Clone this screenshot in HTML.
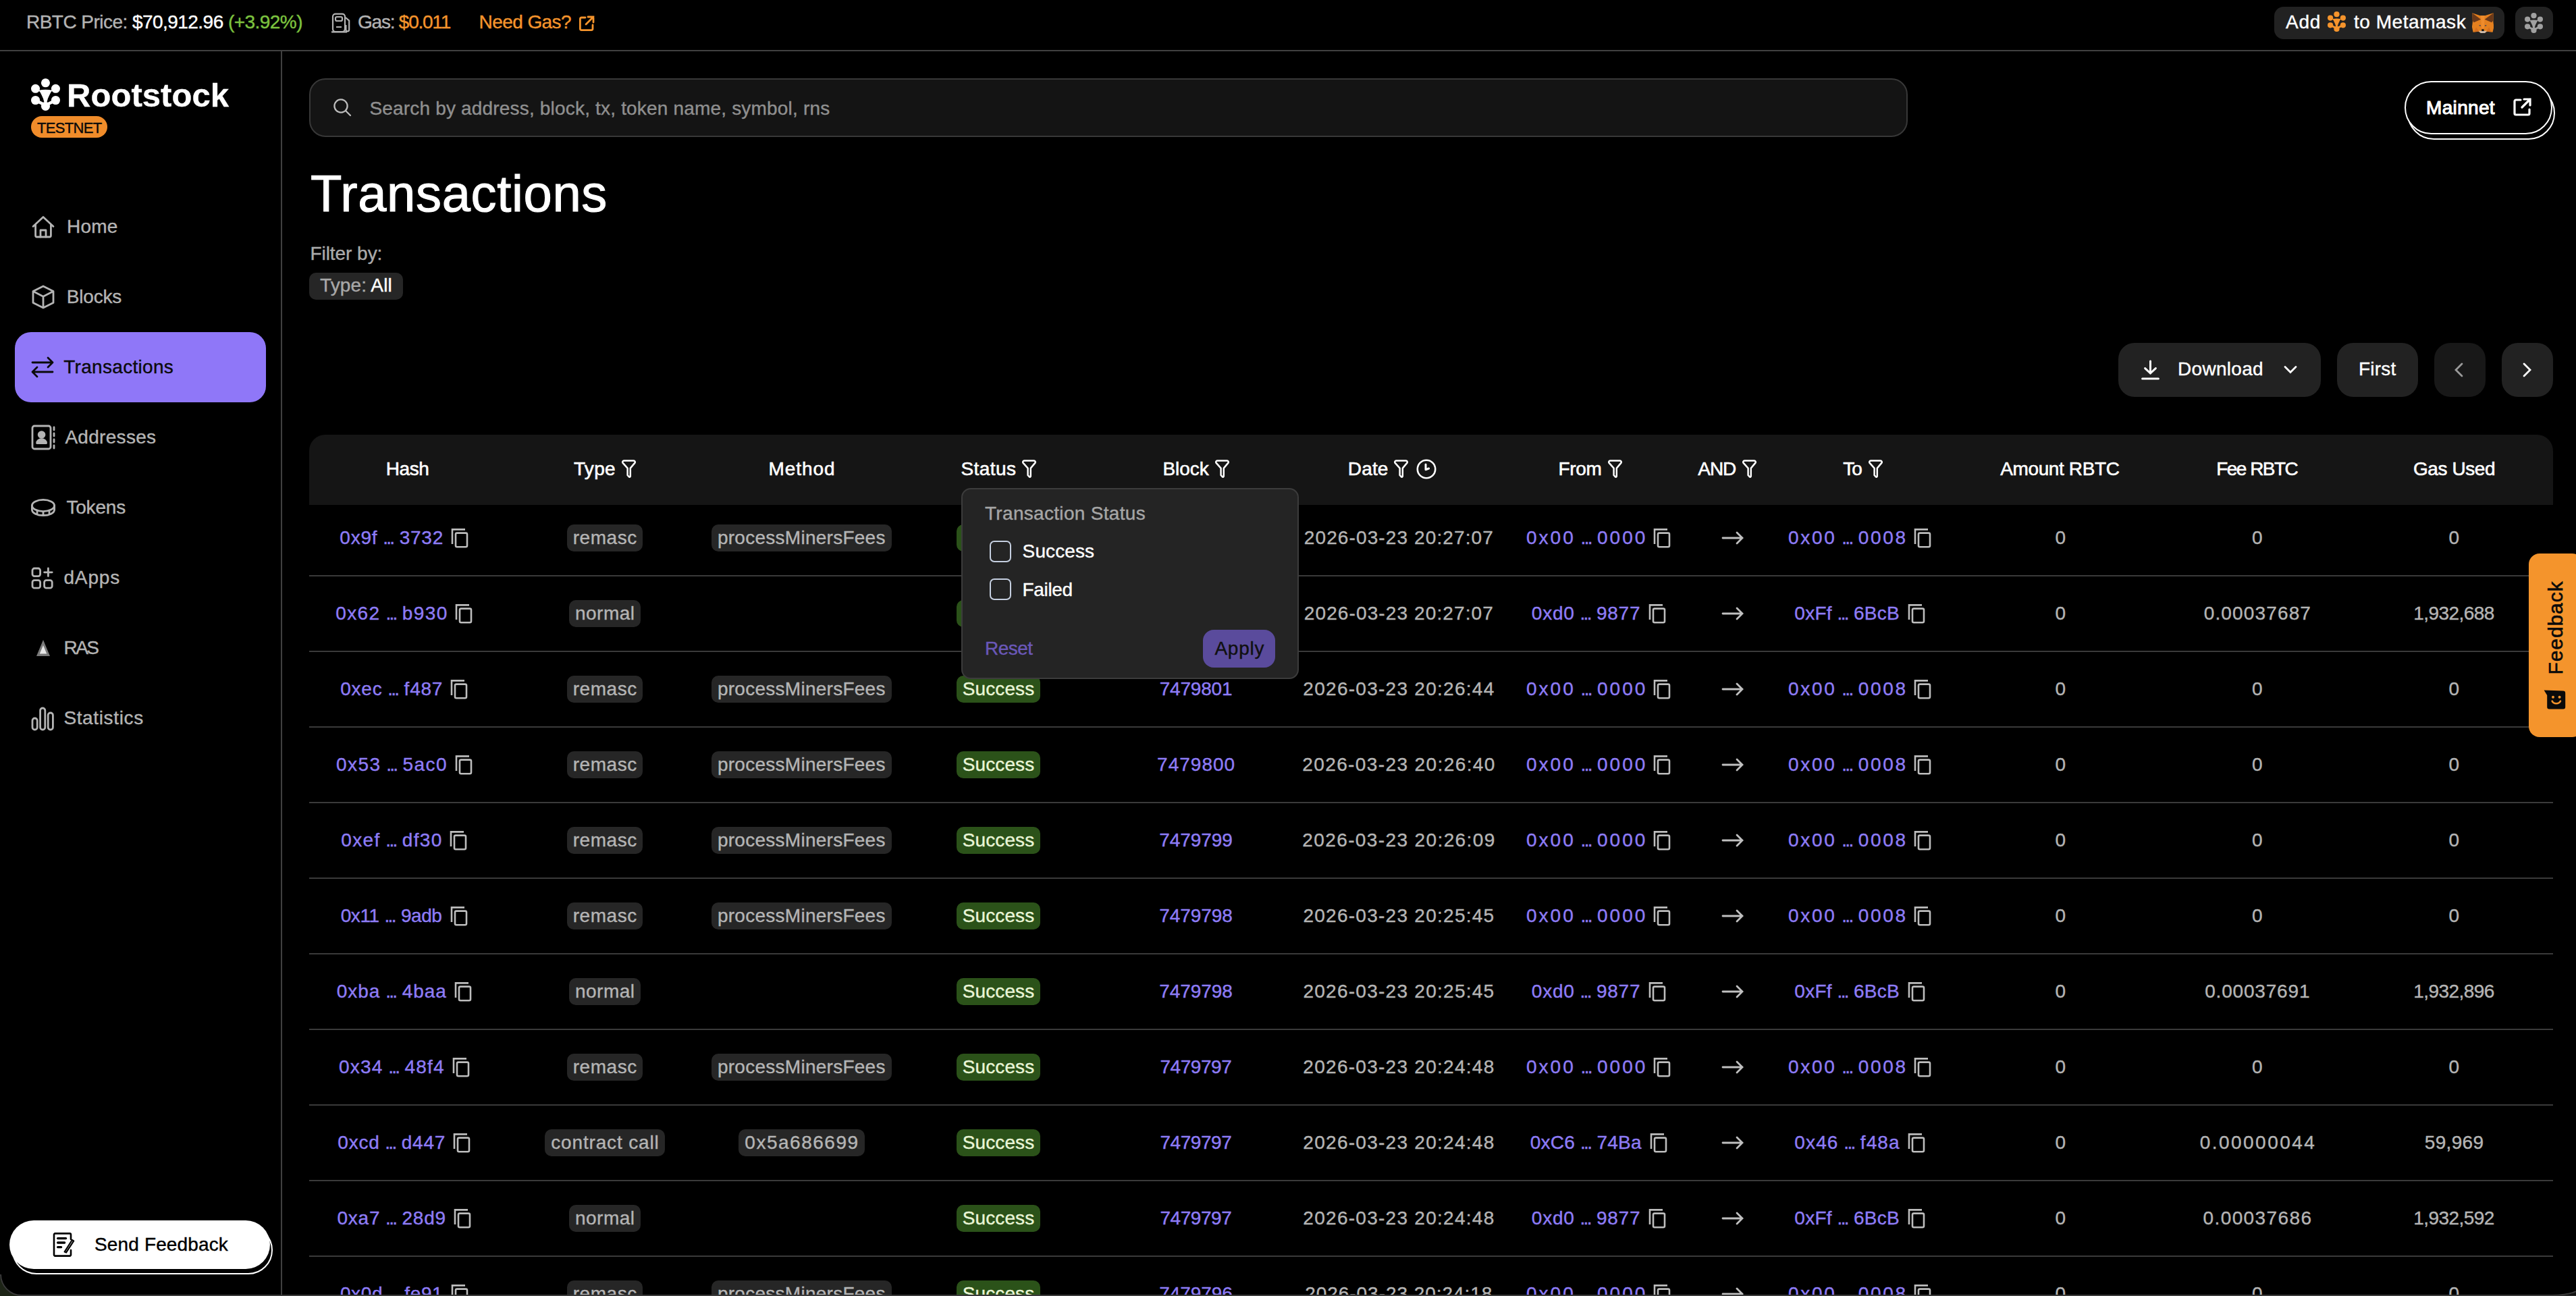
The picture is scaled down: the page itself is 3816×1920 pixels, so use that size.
<!DOCTYPE html>
<html><head><meta charset="utf-8"><title>Transactions</title>
<style>
html,body{margin:0;padding:0;background:#000;}
body{zoom:2;width:1908px;height:960px;overflow:hidden;position:relative;font-family:"Liberation Sans", sans-serif;}
.t{position:absolute;white-space:nowrap;line-height:1;font-family:"Liberation Sans", sans-serif;-webkit-text-stroke:0.2px currentColor;}
.b{position:absolute;}
.g{position:absolute;width:800px;height:20px;display:flex;justify-content:center;align-items:center;white-space:nowrap;font-family:"Liberation Sans", sans-serif;-webkit-text-stroke:0.2px currentColor;}
.g svg{flex:none;}
</style></head><body>
<div class="t" style="left:19.50px;top:9.60px;font-size:14px;color:#b3b3b3;font-weight:400;letter-spacing:-0.269px;"><span style="color:#b3b3b3">RBTC Price: </span><span style="color:#fff">$70,912.96</span> <span style="color:#7cc23f">(+3.92%)</span></div>
<svg style="position:absolute;left:245.00px;top:9.50px;" width="16" height="15" viewBox="0 0 16 15" fill="none"><g stroke="#b3b3b3" stroke-width="1.1" fill="none"><rect x="1.5" y="0.8" width="9" height="13.2" rx="2"/><rect x="3.5" y="3" width="5" height="3" rx="1"/><path d="M4 10.5h4M0.5 14.2h11.5M11 3.5l2.6 2.3v6.7a1.2 1.2 0 0 1-2.4 0V9"/></g></svg>
<div class="t" style="left:265.00px;top:9.60px;font-size:14px;color:#b3b3b3;font-weight:400;letter-spacing:-0.614px;"><span style="color:#b3b3b3">Gas: </span><span style="color:#f5942c">$0.011</span></div>
<div class="t" style="left:354.80px;top:9.60px;font-size:14px;color:#f5942c;font-weight:400;letter-spacing:-0.292px;">Need Gas?</div>
<svg style="position:absolute;left:428.50px;top:11.30px;" width="12" height="12" viewBox="0 0 12 12" fill="none"><g stroke="#f5942c" stroke-width="1.4" fill="none" stroke-linecap="round"><path d="M5 1.5H2.2a1 1 0 0 0-1 1v7.3a1 1 0 0 0 1 1h7.3a1 1 0 0 0 1-1V7"/><path d="M7 1h4v4M11 1L5.5 6.5"/></g></svg>
<div class="b" style="left:1684.50px;top:5.00px;width:170.50px;height:24.00px;background:#222222;border-radius:7px;"></div>
<div class="t" style="left:1693.00px;top:9.55px;font-size:14px;color:#fff;font-weight:400;letter-spacing:0.359px;">Add</div>
<svg style="position:absolute;left:1724.00px;top:8.30px;" width="13.5" height="15" viewBox="5.9 5.8 43.3 48.1" fill="none"><g fill="#f5942c"><circle cx="27.5" cy="12.5" r="6.6"/><circle cx="12.5" cy="21.1" r="6.6"/><circle cx="42.6" cy="21.1" r="6.6"/><circle cx="12.5" cy="38.4" r="6.6"/><circle cx="42.6" cy="38.4" r="6.6"/><circle cx="27.5" cy="47.3" r="6.6"/><path d="M17 23.6 Q27.5 21.5 38 23.6 L35.4 26.5 Q33 31 31 36 L29.6 41 L25.4 41 L24 36 Q22 31 19.6 26.5 Z"/><path d="M12.5 38.4 L27.5 46 L42.6 38.4" stroke="#f5942c" stroke-width="4.5" fill="none"/></g></svg>
<div class="t" style="left:1743.50px;top:9.55px;font-size:14px;color:#fff;font-weight:400;letter-spacing:0.269px;">to Metamask</div>
<svg style="position:absolute;left:1831.00px;top:9.35px;" width="16.05" height="15.1" viewBox="6.9 8.7 32.1 30.2" fill="none"><path d="M7.2 9 L18.5 12.8 L26.5 12.8 L38.6 9 L38.3 22 L39.3 29.5 L37.5 37.5 L29 36.5 L26 38.5 L19.5 38.5 L16.5 36.5 L8.5 37.5 L6.8 29.5 L7.8 22 Z" fill="#e4801f"/><path d="M7.2 9 L20 18.5 L9.5 23 L7.5 20 Z M38.6 9 L25.5 18.5 L36 23 L38.3 20 Z" fill="#6a391a"/><path d="M20 13 L25.5 13 L24.8 32 L21 32 Z" fill="#ef8c2d"/><path d="M13 30 L17.5 36.5 L10 37 Z M32 30 L28 36.5 L35.5 37 Z" fill="#d66f1f"/><path d="M16.5 35.5 L29 35.5 L25.5 39 L20 39 Z" fill="#cdbcad"/><path d="M21.2 33 H24.5 V35.8 H21.2 Z" fill="#111"/><path d="M17.5 27.3 L19.8 27.8 M25.8 27.8 L28.2 27.3" stroke="#33415e" stroke-width="1.2"/></svg>
<div class="b" style="left:1863.00px;top:5.00px;width:28.00px;height:24.00px;background:#222222;border-radius:7px;"></div>
<svg style="position:absolute;left:1870.00px;top:9.30px;" width="13.5" height="15" viewBox="5.9 5.8 43.3 48.1" fill="none"><g fill="#a0a0a0"><circle cx="27.5" cy="12.5" r="6.6"/><circle cx="12.5" cy="21.1" r="6.6"/><circle cx="42.6" cy="21.1" r="6.6"/><circle cx="12.5" cy="38.4" r="6.6"/><circle cx="42.6" cy="38.4" r="6.6"/><circle cx="27.5" cy="47.3" r="6.6"/><path d="M17 23.6 Q27.5 21.5 38 23.6 L35.4 26.5 Q33 31 31 36 L29.6 41 L25.4 41 L24 36 Q22 31 19.6 26.5 Z"/><path d="M12.5 38.4 L27.5 46 L42.6 38.4" stroke="#a0a0a0" stroke-width="4.5" fill="none"/></g></svg>
<div class="b" style="left:0.00px;top:37.00px;width:1908.00px;height:1.00px;background:#404040;border-radius:0px;"></div>
<div class="b" style="left:208.00px;top:38.00px;width:1.00px;height:922.00px;background:#404040;border-radius:0px;"></div>
<svg style="position:absolute;left:23.00px;top:58.00px;" width="21.5" height="24" viewBox="5.9 5.8 43.3 48.1" fill="none"><g fill="#ffffff"><circle cx="27.5" cy="12.5" r="6.6"/><circle cx="12.5" cy="21.1" r="6.6"/><circle cx="42.6" cy="21.1" r="6.6"/><circle cx="12.5" cy="38.4" r="6.6"/><circle cx="42.6" cy="38.4" r="6.6"/><circle cx="27.5" cy="47.3" r="6.6"/><path d="M17 23.6 Q27.5 21.5 38 23.6 L35.4 26.5 Q33 31 31 36 L29.6 41 L25.4 41 L24 36 Q22 31 19.6 26.5 Z"/><path d="M12.5 38.4 L27.5 46 L42.6 38.4" stroke="#ffffff" stroke-width="4.5" fill="none"/></g></svg>
<div class="t" style="left:49.50px;top:58.46px;font-size:24.5px;color:#fff;font-weight:700;letter-spacing:0.023px;">Rootstock</div>
<div class="b" style="left:23.00px;top:86.20px;width:56.40px;height:15.80px;background:#f08c2a;border-radius:8px;"></div>
<div class="t" style="left:27.50px;top:89.29px;font-size:11px;color:#0a0a0a;font-weight:400;letter-spacing:-0.346px;">TESTNET</div>
<div class="t" style="left:49.50px;top:160.85px;font-size:14px;color:#b4b4b4;font-weight:400;letter-spacing:0.110px;">Home</div>
<svg style="position:absolute;left:23.00px;top:159.50px;" width="18" height="17" viewBox="0 0 18 17" fill="none"><g stroke="#b4b4b4" stroke-width="1.4" fill="none" stroke-linecap="round" stroke-linejoin="round"><path d="M1.5 8.2 L9 1.2 L16.5 8.2 M3.3 6.8 V15 a1 1 0 0 0 1 1 H13.7 a1 1 0 0 0 1-1 V6.8"/><path d="M7 16 V11 H11 V16"/></g></svg>
<div class="t" style="left:49.40px;top:212.85px;font-size:14px;color:#b4b4b4;font-weight:400;letter-spacing:-0.106px;">Blocks</div>
<svg style="position:absolute;left:23.00px;top:211.00px;" width="18" height="18" viewBox="0 0 18 18" fill="none"><g stroke="#b4b4b4" stroke-width="1.4" fill="none" stroke-linecap="round" stroke-linejoin="round"><path d="M9 1 L16.5 4.8 V13.2 L9 17 L1.5 13.2 V4.8 Z M1.5 4.8 L9 8.6 L16.5 4.8 M9 8.6 V17"/></g></svg>
<div class="b" style="left:11.00px;top:246.00px;width:186.00px;height:52.00px;background:#8f77f8;border-radius:12px;"></div>
<div class="t" style="left:47.10px;top:264.85px;font-size:14px;color:#0b0b0b;font-weight:400;letter-spacing:0.156px;">Transactions</div>
<svg style="position:absolute;left:23.00px;top:263.50px;" width="17" height="17" viewBox="0 0 17 17" fill="none"><g stroke="#0b0b0b" stroke-width="1.4" fill="none" stroke-linecap="round" stroke-linejoin="round" stroke-width="1.6"><path d="M1 5 H16 M12.5 1.5 L16 5 L12.5 8.5 M16 12 H1 M4.5 8.5 L1 12 L4.5 15.5"/></g></svg>
<div class="t" style="left:48.20px;top:316.85px;font-size:14px;color:#b4b4b4;font-weight:400;letter-spacing:0.149px;">Addresses</div>
<svg style="position:absolute;left:23.00px;top:314.50px;" width="18" height="19" viewBox="0 0 18 19" fill="none"><g stroke="#b4b4b4" stroke-width="1.4" fill="none" stroke-linecap="round" stroke-linejoin="round"><rect x="1" y="1" width="13.5" height="17" rx="1.5"/><circle cx="7.8" cy="7.5" r="2.2" fill="#b4b4b4"/><path d="M4.3 13.8 a3.5 3 0 0 1 7 0 Z" fill="#b4b4b4"/><path d="M17 2 V4 M17 6.5 V8.5 M17 11 V13 M17 15.5 V17.5"/></g></svg>
<div class="t" style="left:49.20px;top:368.85px;font-size:14px;color:#b4b4b4;font-weight:400;letter-spacing:-0.093px;">Tokens</div>
<svg style="position:absolute;left:22.50px;top:369.00px;" width="19" height="14" viewBox="0 0 19 14" fill="none"><g stroke="#b4b4b4" stroke-width="1.4" fill="none" stroke-linecap="round" stroke-linejoin="round"><ellipse cx="9.5" cy="5.5" rx="8.3" ry="4.3"/><path d="M1.2 5.5 V8.5 C1.2 11 5 12.8 9.5 12.8 C14 12.8 17.8 11 17.8 8.5 V5.5 M5 11.8 V9.8 M9.5 12.8 V10.5 M14 11.8 V9.8"/></g></svg>
<div class="t" style="left:47.20px;top:420.85px;font-size:14px;color:#b4b4b4;font-weight:400;letter-spacing:0.439px;">dApps</div>
<svg style="position:absolute;left:23.00px;top:420.00px;" width="17" height="17" viewBox="0 0 17 17" fill="none"><g stroke="#b4b4b4" stroke-width="1.4" fill="none" stroke-linecap="round" stroke-linejoin="round"><rect x="1" y="1" width="5.8" height="5.8" rx="1.5"/><rect x="1" y="9.8" width="5.8" height="5.8" rx="1.5"/><rect x="9.8" y="9.8" width="5.8" height="5.8" rx="1.5"/><path d="M12.7 1 V6.8 M9.8 3.9 H15.6"/></g></svg>
<div class="t" style="left:47.20px;top:472.85px;font-size:14px;color:#b4b4b4;font-weight:400;letter-spacing:-1.232px;">RAS</div>
<svg style="position:absolute;left:26.00px;top:473.00px;" width="12" height="14" viewBox="0 0 12 14" fill="none"><path d="M6 1 L11 13 H1 Z" fill="#7a7a7a"/><path d="M6 5 L8.6 11.3 H3.4 Z" fill="#e8e8e8"/></svg>
<div class="t" style="left:47.20px;top:524.85px;font-size:14px;color:#b4b4b4;font-weight:400;letter-spacing:0.318px;">Statistics</div>
<svg style="position:absolute;left:23.00px;top:523.50px;" width="17" height="18" viewBox="0 0 17 18" fill="none"><g stroke="#b4b4b4" stroke-width="1.4" fill="none" stroke-linecap="round" stroke-linejoin="round"><rect x="1" y="8.5" width="3.6" height="8.5" rx="1.8"/><rect x="6.8" y="1" width="3.6" height="16" rx="1.8"/><rect x="12.6" y="4.5" width="3.6" height="12.5" rx="1.8"/></g></svg>
<div class="b" style="left:9.00px;top:907.90px;width:193.00px;height:36.00px;background:#000;border-radius:18px;border:1px solid #fff;box-sizing:border-box;"></div>
<div class="b" style="left:7.00px;top:903.90px;width:193.00px;height:36.00px;background:#ffffff;border-radius:18px;"></div>
<svg style="position:absolute;left:39.00px;top:913.00px;" width="17" height="18" viewBox="0 0 17 18" fill="none"><g stroke="#000" stroke-width="1.3" fill="none" stroke-linecap="round"><path d="M13.5 13 V16.5 a0.8 0.8 0 0 1-0.8 0.8 H1.8 a0.8 0.8 0 0 1-0.8-0.8 V1.5 a0.8 0.8 0 0 1 0.8-0.8 H12.7 a0.8 0.8 0 0 1 0.8 0.8 V5"/><path d="M3.8 4.3 H9.8 M3.8 7.5 H8.8 M3.8 10.8 H6.3" stroke-width="1.7"/><path d="M15.6 6.2 L10 14.8 L8.8 14.3 L14.4 5.5 Z" fill="#fff" stroke-width="1.1" stroke-linejoin="round"/></g></svg>
<div class="t" style="left:70.00px;top:914.85px;font-size:14px;color:#000;font-weight:400;letter-spacing:0.071px;">Send Feedback</div>
<div class="b" style="left:229.20px;top:58.00px;width:1183.60px;height:43.60px;background:#141414;border-radius:12px;border:1px solid #383838;box-sizing:border-box;"></div>
<svg style="position:absolute;left:246.50px;top:72.50px;" width="14" height="14" viewBox="0 0 14 14" fill="none"><g stroke="#bdbdbd" stroke-width="1.15" fill="none" stroke-linecap="round"><circle cx="6" cy="6" r="4.8"/><path d="M9.6 9.6 L13 13"/></g></svg>
<div class="t" style="left:273.70px;top:73.55px;font-size:14px;color:#8f8f8f;font-weight:400;letter-spacing:0.091px;">Search by address, block, tx, token name, symbol, rns</div>
<div class="b" style="left:1783.00px;top:64.00px;width:109.50px;height:39.50px;background:#000;border-radius:20px;border:1px solid #fff;box-sizing:border-box;"></div>
<div class="b" style="left:1781.00px;top:60.00px;width:109.50px;height:39.50px;background:#000;border-radius:20px;border:1px solid #fff;box-sizing:border-box;"></div>
<div class="t" style="left:1797.00px;top:72.75px;font-size:14px;color:#fff;font-weight:400;letter-spacing:0.170px;-webkit-text-stroke:0.55px #fff;">Mainnet</div>
<svg style="position:absolute;left:1861.00px;top:72.50px;" width="14" height="14" viewBox="0 0 14 14" fill="none"><g stroke="#fff" stroke-width="1.6" fill="none" stroke-linecap="round"><path d="M6 1.5H2.5a1 1 0 0 0-1 1v9a1 1 0 0 0 1 1h9a1 1 0 0 0 1-1V8.5"/><path d="M8.5 1h4.5v4.5M13 1L7 7"/></g></svg>
<div class="t" style="left:230.00px;top:124.53px;font-size:38px;color:#ffffff;font-weight:400;letter-spacing:0.323px;-webkit-text-stroke:0.55px #fff;">Transactions</div>
<div class="t" style="left:229.70px;top:180.75px;font-size:14px;color:#aaaaaa;font-weight:400;letter-spacing:-0.019px;">Filter by:</div>
<div class="b" style="left:229.00px;top:202.00px;width:69.40px;height:20.00px;background:#262626;border-radius:5px;"></div>
<div class="t" style="left:237.00px;top:204.55px;font-size:14px;color:#b3b3b3;font-weight:400;letter-spacing:0.053px;"><span style="color:#a8a8a8">Type: </span><span style="color:#fff">All</span></div>
<div class="b" style="left:1569.00px;top:254.00px;width:150.00px;height:40.00px;background:#222222;border-radius:12px;"></div>
<svg style="position:absolute;left:1586.00px;top:266.50px;" width="13.5" height="15" viewBox="0 0 13.5 15" fill="none"><g stroke="#fff" stroke-width="1.5" fill="none" stroke-linecap="round"><path d="M6.75 1 V10 M2.8 6.3 L6.75 10 L10.7 6.3 M0.8 14 H12.7"/></g></svg>
<div class="t" style="left:1613.00px;top:266.55px;font-size:14px;color:#fff;font-weight:400;letter-spacing:0.154px;">Download</div>
<svg style="position:absolute;left:1691.50px;top:270.50px;" width="10" height="7" viewBox="0 0 10 7" fill="none"><path d="M1 1.2 L5 5.2 L9 1.2" stroke="#fff" stroke-width="1.4" fill="none" stroke-linecap="round"/></svg>
<div class="b" style="left:1731.00px;top:254.00px;width:60.00px;height:40.00px;background:#222222;border-radius:12px;"></div>
<div class="t" style="left:1747.00px;top:266.55px;font-size:14px;color:#fff;font-weight:400;letter-spacing:0.096px;">First</div>
<div class="b" style="left:1803.00px;top:254.00px;width:38.00px;height:40.00px;background:#181818;border-radius:12px;"></div>
<svg style="position:absolute;left:1817.50px;top:268.50px;" width="7" height="11" viewBox="0 0 7 11" fill="none"><path d="M6 1 L1.5 5.5 L6 10" stroke="#9a9a9a" stroke-width="1.4" fill="none" stroke-linecap="round"/></svg>
<div class="b" style="left:1853.00px;top:254.00px;width:38.00px;height:40.00px;background:#222222;border-radius:12px;"></div>
<svg style="position:absolute;left:1868.50px;top:268.50px;" width="7" height="11" viewBox="0 0 7 11" fill="none"><path d="M1 1 L5.5 5.5 L1 10" stroke="#fff" stroke-width="1.4" fill="none" stroke-linecap="round"/></svg>
<div class="b" style="left:0;top:0;width:1908px;height:960px;overflow:hidden">
<div class="b" style="left:229.00px;top:426.00px;width:1662.00px;height:1.00px;background:#3a3a3a;border-radius:0px;"></div>
<div class="g" style="left:-100.60px;top:388.50px;gap:6px"><span style="font-size:14px;color:#8e7cf6;font-weight:400;line-height:1;margin-right:-0.400px;"><span style="letter-spacing:0.4px">0x9f</span> <span style="letter-spacing:-1.35px">..</span><span style="letter-spacing:-0.65px">.</span> <span style="letter-spacing:0.4px">3732</span></span><svg style="" width="13" height="15" viewBox="0 0 13 15" fill="none"><g stroke="#bdbdbd" stroke-width="1.3" fill="none"><path d="M1 12 V1.2 H10.5"/><rect x="3.5" y="3.8" width="8.5" height="10.3" rx="1"/></g></svg></div>
<div class="b" style="left:420.00px;top:388.50px;width:56.00px;height:20.00px;background:#262626;border-radius:5px;"></div>
<div class="t" style="left:48.13px;width:800px;text-align:center;top:391.25px;font-size:14px;color:#b4b4b4;font-weight:400;letter-spacing:0.266px;">remasc</div>
<div class="b" style="left:526.90px;top:388.50px;width:133.40px;height:20.00px;background:#262626;border-radius:5px;"></div>
<div class="t" style="left:193.67px;width:800px;text-align:center;top:391.25px;font-size:14px;color:#b4b4b4;font-weight:400;letter-spacing:0.132px;">processMinersFees</div>
<div class="b" style="left:708.50px;top:388.50px;width:62.00px;height:20.00px;background:#2b5219;border-radius:5px;"></div>
<div class="t" style="left:339.53px;width:800px;text-align:center;top:391.25px;font-size:14px;color:#e9f5d6;font-weight:400;letter-spacing:0.054px;">Success</div>
<div class="t" style="left:485.96px;width:800px;text-align:center;top:391.25px;font-size:14px;color:#8e7cf6;font-weight:400;letter-spacing:0.324px;">7479802</div>
<div class="t" style="left:636.18px;width:800px;text-align:center;top:391.25px;font-size:14px;color:#b4b4b4;font-weight:400;letter-spacing:0.555px;">2026-03-23 20:27:07</div>
<div class="g" style="left:784.10px;top:388.50px;gap:6px"><span style="font-size:14px;color:#8e7cf6;font-weight:400;line-height:1;margin-right:-1.510px;"><span style="letter-spacing:1.51px">0x00</span> <span style="letter-spacing:-1.35px">..</span><span style="letter-spacing:-0.65px">.</span> <span style="letter-spacing:1.51px">0000</span></span><svg style="" width="13" height="15" viewBox="0 0 13 15" fill="none"><g stroke="#bdbdbd" stroke-width="1.3" fill="none"><path d="M1 12 V1.2 H10.5"/><rect x="3.5" y="3.8" width="8.5" height="10.3" rx="1"/></g></svg></div>
<svg style="position:absolute;left:1275.00px;top:393.50px;" width="17" height="10" viewBox="0 0 17 10" fill="none"><g stroke="#c0c0c0" stroke-width="1.4" fill="none" stroke-linecap="round"><path d="M1 5 H15.5 M11.5 1 L15.5 5 L11.5 9"/></g></svg>
<div class="g" style="left:977.50px;top:388.50px;gap:6px"><span style="font-size:14px;color:#8e7cf6;font-weight:400;line-height:1;margin-right:-1.350px;"><span style="letter-spacing:1.35px">0x00</span> <span style="letter-spacing:-1.35px">..</span><span style="letter-spacing:-0.65px">.</span> <span style="letter-spacing:1.35px">0008</span></span><svg style="" width="13" height="15" viewBox="0 0 13 15" fill="none"><g stroke="#bdbdbd" stroke-width="1.3" fill="none"><path d="M1 12 V1.2 H10.5"/><rect x="3.5" y="3.8" width="8.5" height="10.3" rx="1"/></g></svg></div>
<div class="t" style="left:1126.97px;width:800px;text-align:center;top:391.25px;font-size:14px;color:#b4b4b4;font-weight:400;letter-spacing:1.748px;">0</div>
<div class="t" style="left:1272.77px;width:800px;text-align:center;top:391.25px;font-size:14px;color:#b4b4b4;font-weight:400;letter-spacing:1.748px;">0</div>
<div class="t" style="left:1418.57px;width:800px;text-align:center;top:391.25px;font-size:14px;color:#b4b4b4;font-weight:400;letter-spacing:1.748px;">0</div>
<div class="b" style="left:229.00px;top:482.00px;width:1662.00px;height:1.00px;background:#3a3a3a;border-radius:0px;"></div>
<div class="g" style="left:-100.60px;top:444.50px;gap:6px"><span style="font-size:14px;color:#8e7cf6;font-weight:400;line-height:1;margin-right:-0.710px;"><span style="letter-spacing:0.71px">0x62</span> <span style="letter-spacing:-1.35px">..</span><span style="letter-spacing:-0.65px">.</span> <span style="letter-spacing:0.71px">b930</span></span><svg style="" width="13" height="15" viewBox="0 0 13 15" fill="none"><g stroke="#bdbdbd" stroke-width="1.3" fill="none"><path d="M1 12 V1.2 H10.5"/><rect x="3.5" y="3.8" width="8.5" height="10.3" rx="1"/></g></svg></div>
<div class="b" style="left:421.65px;top:444.50px;width:52.70px;height:20.00px;background:#262626;border-radius:5px;"></div>
<div class="t" style="left:48.12px;width:800px;text-align:center;top:447.25px;font-size:14px;color:#b4b4b4;font-weight:400;letter-spacing:0.234px;">normal</div>
<div class="b" style="left:708.50px;top:444.50px;width:62.00px;height:20.00px;background:#2b5219;border-radius:5px;"></div>
<div class="t" style="left:339.53px;width:800px;text-align:center;top:447.25px;font-size:14px;color:#e9f5d6;font-weight:400;letter-spacing:0.054px;">Success</div>
<div class="t" style="left:485.96px;width:800px;text-align:center;top:447.25px;font-size:14px;color:#8e7cf6;font-weight:400;letter-spacing:0.324px;">7479802</div>
<div class="t" style="left:636.18px;width:800px;text-align:center;top:447.25px;font-size:14px;color:#b4b4b4;font-weight:400;letter-spacing:0.555px;">2026-03-23 20:27:07</div>
<div class="g" style="left:784.10px;top:444.50px;gap:6px"><span style="font-size:14px;color:#8e7cf6;font-weight:400;line-height:1;margin-right:-0.390px;"><span style="letter-spacing:0.39px">0xd0</span> <span style="letter-spacing:-1.35px">..</span><span style="letter-spacing:-0.65px">.</span> <span style="letter-spacing:0.39px">9877</span></span><svg style="" width="13" height="15" viewBox="0 0 13 15" fill="none"><g stroke="#bdbdbd" stroke-width="1.3" fill="none"><path d="M1 12 V1.2 H10.5"/><rect x="3.5" y="3.8" width="8.5" height="10.3" rx="1"/></g></svg></div>
<svg style="position:absolute;left:1275.00px;top:449.50px;" width="17" height="10" viewBox="0 0 17 10" fill="none"><g stroke="#c0c0c0" stroke-width="1.4" fill="none" stroke-linecap="round"><path d="M1 5 H15.5 M11.5 1 L15.5 5 L11.5 9"/></g></svg>
<div class="g" style="left:977.50px;top:444.50px;gap:6px"><span style="font-size:14px;color:#8e7cf6;font-weight:400;line-height:1;margin-right:-0.120px;"><span style="letter-spacing:0.12px">0xFf</span> <span style="letter-spacing:-1.35px">..</span><span style="letter-spacing:-0.65px">.</span> <span style="letter-spacing:0.12px">6BcB</span></span><svg style="" width="13" height="15" viewBox="0 0 13 15" fill="none"><g stroke="#bdbdbd" stroke-width="1.3" fill="none"><path d="M1 12 V1.2 H10.5"/><rect x="3.5" y="3.8" width="8.5" height="10.3" rx="1"/></g></svg></div>
<div class="t" style="left:1126.97px;width:800px;text-align:center;top:447.25px;font-size:14px;color:#b4b4b4;font-weight:400;letter-spacing:1.748px;">0</div>
<div class="t" style="left:1272.19px;width:800px;text-align:center;top:447.25px;font-size:14px;color:#b4b4b4;font-weight:400;letter-spacing:0.574px;">0.00037687</div>
<div class="t" style="left:1417.56px;width:800px;text-align:center;top:447.25px;font-size:14px;color:#b4b4b4;font-weight:400;letter-spacing:-0.279px;">1,932,688</div>
<div class="b" style="left:229.00px;top:538.00px;width:1662.00px;height:1.00px;background:#3a3a3a;border-radius:0px;"></div>
<div class="g" style="left:-100.60px;top:500.50px;gap:6px"><span style="font-size:14px;color:#8e7cf6;font-weight:400;line-height:1;margin-right:-0.370px;"><span style="letter-spacing:0.37px">0xec</span> <span style="letter-spacing:-1.35px">..</span><span style="letter-spacing:-0.65px">.</span> <span style="letter-spacing:0.37px">f487</span></span><svg style="" width="13" height="15" viewBox="0 0 13 15" fill="none"><g stroke="#bdbdbd" stroke-width="1.3" fill="none"><path d="M1 12 V1.2 H10.5"/><rect x="3.5" y="3.8" width="8.5" height="10.3" rx="1"/></g></svg></div>
<div class="b" style="left:420.00px;top:500.50px;width:56.00px;height:20.00px;background:#262626;border-radius:5px;"></div>
<div class="t" style="left:48.13px;width:800px;text-align:center;top:503.25px;font-size:14px;color:#b4b4b4;font-weight:400;letter-spacing:0.266px;">remasc</div>
<div class="b" style="left:526.90px;top:500.50px;width:133.40px;height:20.00px;background:#262626;border-radius:5px;"></div>
<div class="t" style="left:193.67px;width:800px;text-align:center;top:503.25px;font-size:14px;color:#b4b4b4;font-weight:400;letter-spacing:0.132px;">processMinersFees</div>
<div class="b" style="left:708.50px;top:500.50px;width:62.00px;height:20.00px;background:#2b5219;border-radius:5px;"></div>
<div class="t" style="left:339.53px;width:800px;text-align:center;top:503.25px;font-size:14px;color:#e9f5d6;font-weight:400;letter-spacing:0.054px;">Success</div>
<div class="t" style="left:485.75px;width:800px;text-align:center;top:503.25px;font-size:14px;color:#8e7cf6;font-weight:400;letter-spacing:-0.095px;">7479801</div>
<div class="t" style="left:636.22px;width:800px;text-align:center;top:503.25px;font-size:14px;color:#b4b4b4;font-weight:400;letter-spacing:0.636px;">2026-03-23 20:26:44</div>
<div class="g" style="left:784.10px;top:500.50px;gap:6px"><span style="font-size:14px;color:#8e7cf6;font-weight:400;line-height:1;margin-right:-1.510px;"><span style="letter-spacing:1.51px">0x00</span> <span style="letter-spacing:-1.35px">..</span><span style="letter-spacing:-0.65px">.</span> <span style="letter-spacing:1.51px">0000</span></span><svg style="" width="13" height="15" viewBox="0 0 13 15" fill="none"><g stroke="#bdbdbd" stroke-width="1.3" fill="none"><path d="M1 12 V1.2 H10.5"/><rect x="3.5" y="3.8" width="8.5" height="10.3" rx="1"/></g></svg></div>
<svg style="position:absolute;left:1275.00px;top:505.50px;" width="17" height="10" viewBox="0 0 17 10" fill="none"><g stroke="#c0c0c0" stroke-width="1.4" fill="none" stroke-linecap="round"><path d="M1 5 H15.5 M11.5 1 L15.5 5 L11.5 9"/></g></svg>
<div class="g" style="left:977.50px;top:500.50px;gap:6px"><span style="font-size:14px;color:#8e7cf6;font-weight:400;line-height:1;margin-right:-1.350px;"><span style="letter-spacing:1.35px">0x00</span> <span style="letter-spacing:-1.35px">..</span><span style="letter-spacing:-0.65px">.</span> <span style="letter-spacing:1.35px">0008</span></span><svg style="" width="13" height="15" viewBox="0 0 13 15" fill="none"><g stroke="#bdbdbd" stroke-width="1.3" fill="none"><path d="M1 12 V1.2 H10.5"/><rect x="3.5" y="3.8" width="8.5" height="10.3" rx="1"/></g></svg></div>
<div class="t" style="left:1126.97px;width:800px;text-align:center;top:503.25px;font-size:14px;color:#b4b4b4;font-weight:400;letter-spacing:1.748px;">0</div>
<div class="t" style="left:1272.77px;width:800px;text-align:center;top:503.25px;font-size:14px;color:#b4b4b4;font-weight:400;letter-spacing:1.748px;">0</div>
<div class="t" style="left:1418.57px;width:800px;text-align:center;top:503.25px;font-size:14px;color:#b4b4b4;font-weight:400;letter-spacing:1.748px;">0</div>
<div class="b" style="left:229.00px;top:594.00px;width:1662.00px;height:1.00px;background:#3a3a3a;border-radius:0px;"></div>
<div class="g" style="left:-100.60px;top:556.50px;gap:6px"><span style="font-size:14px;color:#8e7cf6;font-weight:400;line-height:1;margin-right:-0.700px;"><span style="letter-spacing:0.7px">0x53</span> <span style="letter-spacing:-1.35px">..</span><span style="letter-spacing:-0.65px">.</span> <span style="letter-spacing:0.7px">5ac0</span></span><svg style="" width="13" height="15" viewBox="0 0 13 15" fill="none"><g stroke="#bdbdbd" stroke-width="1.3" fill="none"><path d="M1 12 V1.2 H10.5"/><rect x="3.5" y="3.8" width="8.5" height="10.3" rx="1"/></g></svg></div>
<div class="b" style="left:420.00px;top:556.50px;width:56.00px;height:20.00px;background:#262626;border-radius:5px;"></div>
<div class="t" style="left:48.13px;width:800px;text-align:center;top:559.25px;font-size:14px;color:#b4b4b4;font-weight:400;letter-spacing:0.266px;">remasc</div>
<div class="b" style="left:526.90px;top:556.50px;width:133.40px;height:20.00px;background:#262626;border-radius:5px;"></div>
<div class="t" style="left:193.67px;width:800px;text-align:center;top:559.25px;font-size:14px;color:#b4b4b4;font-weight:400;letter-spacing:0.132px;">processMinersFees</div>
<div class="b" style="left:708.50px;top:556.50px;width:62.00px;height:20.00px;background:#2b5219;border-radius:5px;"></div>
<div class="t" style="left:339.53px;width:800px;text-align:center;top:559.25px;font-size:14px;color:#e9f5d6;font-weight:400;letter-spacing:0.054px;">Success</div>
<div class="t" style="left:486.05px;width:800px;text-align:center;top:559.25px;font-size:14px;color:#8e7cf6;font-weight:400;letter-spacing:0.501px;">7479800</div>
<div class="t" style="left:636.25px;width:800px;text-align:center;top:559.25px;font-size:14px;color:#b4b4b4;font-weight:400;letter-spacing:0.697px;">2026-03-23 20:26:40</div>
<div class="g" style="left:784.10px;top:556.50px;gap:6px"><span style="font-size:14px;color:#8e7cf6;font-weight:400;line-height:1;margin-right:-1.510px;"><span style="letter-spacing:1.51px">0x00</span> <span style="letter-spacing:-1.35px">..</span><span style="letter-spacing:-0.65px">.</span> <span style="letter-spacing:1.51px">0000</span></span><svg style="" width="13" height="15" viewBox="0 0 13 15" fill="none"><g stroke="#bdbdbd" stroke-width="1.3" fill="none"><path d="M1 12 V1.2 H10.5"/><rect x="3.5" y="3.8" width="8.5" height="10.3" rx="1"/></g></svg></div>
<svg style="position:absolute;left:1275.00px;top:561.50px;" width="17" height="10" viewBox="0 0 17 10" fill="none"><g stroke="#c0c0c0" stroke-width="1.4" fill="none" stroke-linecap="round"><path d="M1 5 H15.5 M11.5 1 L15.5 5 L11.5 9"/></g></svg>
<div class="g" style="left:977.50px;top:556.50px;gap:6px"><span style="font-size:14px;color:#8e7cf6;font-weight:400;line-height:1;margin-right:-1.350px;"><span style="letter-spacing:1.35px">0x00</span> <span style="letter-spacing:-1.35px">..</span><span style="letter-spacing:-0.65px">.</span> <span style="letter-spacing:1.35px">0008</span></span><svg style="" width="13" height="15" viewBox="0 0 13 15" fill="none"><g stroke="#bdbdbd" stroke-width="1.3" fill="none"><path d="M1 12 V1.2 H10.5"/><rect x="3.5" y="3.8" width="8.5" height="10.3" rx="1"/></g></svg></div>
<div class="t" style="left:1126.97px;width:800px;text-align:center;top:559.25px;font-size:14px;color:#b4b4b4;font-weight:400;letter-spacing:1.748px;">0</div>
<div class="t" style="left:1272.77px;width:800px;text-align:center;top:559.25px;font-size:14px;color:#b4b4b4;font-weight:400;letter-spacing:1.748px;">0</div>
<div class="t" style="left:1418.57px;width:800px;text-align:center;top:559.25px;font-size:14px;color:#b4b4b4;font-weight:400;letter-spacing:1.748px;">0</div>
<div class="b" style="left:229.00px;top:650.00px;width:1662.00px;height:1.00px;background:#3a3a3a;border-radius:0px;"></div>
<div class="g" style="left:-100.60px;top:612.50px;gap:6px"><span style="font-size:14px;color:#8e7cf6;font-weight:400;line-height:1;margin-right:-0.660px;"><span style="letter-spacing:0.66px">0xef</span> <span style="letter-spacing:-1.35px">..</span><span style="letter-spacing:-0.65px">.</span> <span style="letter-spacing:0.66px">df30</span></span><svg style="" width="13" height="15" viewBox="0 0 13 15" fill="none"><g stroke="#bdbdbd" stroke-width="1.3" fill="none"><path d="M1 12 V1.2 H10.5"/><rect x="3.5" y="3.8" width="8.5" height="10.3" rx="1"/></g></svg></div>
<div class="b" style="left:420.00px;top:612.50px;width:56.00px;height:20.00px;background:#262626;border-radius:5px;"></div>
<div class="t" style="left:48.13px;width:800px;text-align:center;top:615.25px;font-size:14px;color:#b4b4b4;font-weight:400;letter-spacing:0.266px;">remasc</div>
<div class="b" style="left:526.90px;top:612.50px;width:133.40px;height:20.00px;background:#262626;border-radius:5px;"></div>
<div class="t" style="left:193.67px;width:800px;text-align:center;top:615.25px;font-size:14px;color:#b4b4b4;font-weight:400;letter-spacing:0.132px;">processMinersFees</div>
<div class="b" style="left:708.50px;top:612.50px;width:62.00px;height:20.00px;background:#2b5219;border-radius:5px;"></div>
<div class="t" style="left:339.53px;width:800px;text-align:center;top:615.25px;font-size:14px;color:#e9f5d6;font-weight:400;letter-spacing:0.054px;">Success</div>
<div class="t" style="left:485.78px;width:800px;text-align:center;top:615.25px;font-size:14px;color:#8e7cf6;font-weight:400;letter-spacing:-0.039px;">7479799</div>
<div class="t" style="left:636.25px;width:800px;text-align:center;top:615.25px;font-size:14px;color:#b4b4b4;font-weight:400;letter-spacing:0.693px;">2026-03-23 20:26:09</div>
<div class="g" style="left:784.10px;top:612.50px;gap:6px"><span style="font-size:14px;color:#8e7cf6;font-weight:400;line-height:1;margin-right:-1.510px;"><span style="letter-spacing:1.51px">0x00</span> <span style="letter-spacing:-1.35px">..</span><span style="letter-spacing:-0.65px">.</span> <span style="letter-spacing:1.51px">0000</span></span><svg style="" width="13" height="15" viewBox="0 0 13 15" fill="none"><g stroke="#bdbdbd" stroke-width="1.3" fill="none"><path d="M1 12 V1.2 H10.5"/><rect x="3.5" y="3.8" width="8.5" height="10.3" rx="1"/></g></svg></div>
<svg style="position:absolute;left:1275.00px;top:617.50px;" width="17" height="10" viewBox="0 0 17 10" fill="none"><g stroke="#c0c0c0" stroke-width="1.4" fill="none" stroke-linecap="round"><path d="M1 5 H15.5 M11.5 1 L15.5 5 L11.5 9"/></g></svg>
<div class="g" style="left:977.50px;top:612.50px;gap:6px"><span style="font-size:14px;color:#8e7cf6;font-weight:400;line-height:1;margin-right:-1.350px;"><span style="letter-spacing:1.35px">0x00</span> <span style="letter-spacing:-1.35px">..</span><span style="letter-spacing:-0.65px">.</span> <span style="letter-spacing:1.35px">0008</span></span><svg style="" width="13" height="15" viewBox="0 0 13 15" fill="none"><g stroke="#bdbdbd" stroke-width="1.3" fill="none"><path d="M1 12 V1.2 H10.5"/><rect x="3.5" y="3.8" width="8.5" height="10.3" rx="1"/></g></svg></div>
<div class="t" style="left:1126.97px;width:800px;text-align:center;top:615.25px;font-size:14px;color:#b4b4b4;font-weight:400;letter-spacing:1.748px;">0</div>
<div class="t" style="left:1272.77px;width:800px;text-align:center;top:615.25px;font-size:14px;color:#b4b4b4;font-weight:400;letter-spacing:1.748px;">0</div>
<div class="t" style="left:1418.57px;width:800px;text-align:center;top:615.25px;font-size:14px;color:#b4b4b4;font-weight:400;letter-spacing:1.748px;">0</div>
<div class="b" style="left:229.00px;top:706.00px;width:1662.00px;height:1.00px;background:#3a3a3a;border-radius:0px;"></div>
<div class="g" style="left:-100.60px;top:668.50px;gap:6px"><span style="font-size:14px;color:#8e7cf6;font-weight:400;line-height:1;margin-right:0.210px;"><span style="letter-spacing:-0.21px">0x11</span> <span style="letter-spacing:-1.35px">..</span><span style="letter-spacing:-0.65px">.</span> <span style="letter-spacing:-0.21px">9adb</span></span><svg style="" width="13" height="15" viewBox="0 0 13 15" fill="none"><g stroke="#bdbdbd" stroke-width="1.3" fill="none"><path d="M1 12 V1.2 H10.5"/><rect x="3.5" y="3.8" width="8.5" height="10.3" rx="1"/></g></svg></div>
<div class="b" style="left:420.00px;top:668.50px;width:56.00px;height:20.00px;background:#262626;border-radius:5px;"></div>
<div class="t" style="left:48.13px;width:800px;text-align:center;top:671.25px;font-size:14px;color:#b4b4b4;font-weight:400;letter-spacing:0.266px;">remasc</div>
<div class="b" style="left:526.90px;top:668.50px;width:133.40px;height:20.00px;background:#262626;border-radius:5px;"></div>
<div class="t" style="left:193.67px;width:800px;text-align:center;top:671.25px;font-size:14px;color:#b4b4b4;font-weight:400;letter-spacing:0.132px;">processMinersFees</div>
<div class="b" style="left:708.50px;top:668.50px;width:62.00px;height:20.00px;background:#2b5219;border-radius:5px;"></div>
<div class="t" style="left:339.53px;width:800px;text-align:center;top:671.25px;font-size:14px;color:#e9f5d6;font-weight:400;letter-spacing:0.054px;">Success</div>
<div class="t" style="left:485.78px;width:800px;text-align:center;top:671.25px;font-size:14px;color:#8e7cf6;font-weight:400;letter-spacing:-0.039px;">7479798</div>
<div class="t" style="left:636.22px;width:800px;text-align:center;top:671.25px;font-size:14px;color:#b4b4b4;font-weight:400;letter-spacing:0.632px;">2026-03-23 20:25:45</div>
<div class="g" style="left:784.10px;top:668.50px;gap:6px"><span style="font-size:14px;color:#8e7cf6;font-weight:400;line-height:1;margin-right:-1.510px;"><span style="letter-spacing:1.51px">0x00</span> <span style="letter-spacing:-1.35px">..</span><span style="letter-spacing:-0.65px">.</span> <span style="letter-spacing:1.51px">0000</span></span><svg style="" width="13" height="15" viewBox="0 0 13 15" fill="none"><g stroke="#bdbdbd" stroke-width="1.3" fill="none"><path d="M1 12 V1.2 H10.5"/><rect x="3.5" y="3.8" width="8.5" height="10.3" rx="1"/></g></svg></div>
<svg style="position:absolute;left:1275.00px;top:673.50px;" width="17" height="10" viewBox="0 0 17 10" fill="none"><g stroke="#c0c0c0" stroke-width="1.4" fill="none" stroke-linecap="round"><path d="M1 5 H15.5 M11.5 1 L15.5 5 L11.5 9"/></g></svg>
<div class="g" style="left:977.50px;top:668.50px;gap:6px"><span style="font-size:14px;color:#8e7cf6;font-weight:400;line-height:1;margin-right:-1.350px;"><span style="letter-spacing:1.35px">0x00</span> <span style="letter-spacing:-1.35px">..</span><span style="letter-spacing:-0.65px">.</span> <span style="letter-spacing:1.35px">0008</span></span><svg style="" width="13" height="15" viewBox="0 0 13 15" fill="none"><g stroke="#bdbdbd" stroke-width="1.3" fill="none"><path d="M1 12 V1.2 H10.5"/><rect x="3.5" y="3.8" width="8.5" height="10.3" rx="1"/></g></svg></div>
<div class="t" style="left:1126.97px;width:800px;text-align:center;top:671.25px;font-size:14px;color:#b4b4b4;font-weight:400;letter-spacing:1.748px;">0</div>
<div class="t" style="left:1272.77px;width:800px;text-align:center;top:671.25px;font-size:14px;color:#b4b4b4;font-weight:400;letter-spacing:1.748px;">0</div>
<div class="t" style="left:1418.57px;width:800px;text-align:center;top:671.25px;font-size:14px;color:#b4b4b4;font-weight:400;letter-spacing:1.748px;">0</div>
<div class="b" style="left:229.00px;top:762.00px;width:1662.00px;height:1.00px;background:#3a3a3a;border-radius:0px;"></div>
<div class="g" style="left:-100.60px;top:724.50px;gap:6px"><span style="font-size:14px;color:#8e7cf6;font-weight:400;line-height:1;margin-right:-0.500px;"><span style="letter-spacing:0.5px">0xba</span> <span style="letter-spacing:-1.35px">..</span><span style="letter-spacing:-0.65px">.</span> <span style="letter-spacing:0.5px">4baa</span></span><svg style="" width="13" height="15" viewBox="0 0 13 15" fill="none"><g stroke="#bdbdbd" stroke-width="1.3" fill="none"><path d="M1 12 V1.2 H10.5"/><rect x="3.5" y="3.8" width="8.5" height="10.3" rx="1"/></g></svg></div>
<div class="b" style="left:421.65px;top:724.50px;width:52.70px;height:20.00px;background:#262626;border-radius:5px;"></div>
<div class="t" style="left:48.12px;width:800px;text-align:center;top:727.25px;font-size:14px;color:#b4b4b4;font-weight:400;letter-spacing:0.234px;">normal</div>
<div class="b" style="left:708.50px;top:724.50px;width:62.00px;height:20.00px;background:#2b5219;border-radius:5px;"></div>
<div class="t" style="left:339.53px;width:800px;text-align:center;top:727.25px;font-size:14px;color:#e9f5d6;font-weight:400;letter-spacing:0.054px;">Success</div>
<div class="t" style="left:485.78px;width:800px;text-align:center;top:727.25px;font-size:14px;color:#8e7cf6;font-weight:400;letter-spacing:-0.039px;">7479798</div>
<div class="t" style="left:636.22px;width:800px;text-align:center;top:727.25px;font-size:14px;color:#b4b4b4;font-weight:400;letter-spacing:0.632px;">2026-03-23 20:25:45</div>
<div class="g" style="left:784.10px;top:724.50px;gap:6px"><span style="font-size:14px;color:#8e7cf6;font-weight:400;line-height:1;margin-right:-0.390px;"><span style="letter-spacing:0.39px">0xd0</span> <span style="letter-spacing:-1.35px">..</span><span style="letter-spacing:-0.65px">.</span> <span style="letter-spacing:0.39px">9877</span></span><svg style="" width="13" height="15" viewBox="0 0 13 15" fill="none"><g stroke="#bdbdbd" stroke-width="1.3" fill="none"><path d="M1 12 V1.2 H10.5"/><rect x="3.5" y="3.8" width="8.5" height="10.3" rx="1"/></g></svg></div>
<svg style="position:absolute;left:1275.00px;top:729.50px;" width="17" height="10" viewBox="0 0 17 10" fill="none"><g stroke="#c0c0c0" stroke-width="1.4" fill="none" stroke-linecap="round"><path d="M1 5 H15.5 M11.5 1 L15.5 5 L11.5 9"/></g></svg>
<div class="g" style="left:977.50px;top:724.50px;gap:6px"><span style="font-size:14px;color:#8e7cf6;font-weight:400;line-height:1;margin-right:-0.120px;"><span style="letter-spacing:0.12px">0xFf</span> <span style="letter-spacing:-1.35px">..</span><span style="letter-spacing:-0.65px">.</span> <span style="letter-spacing:0.12px">6BcB</span></span><svg style="" width="13" height="15" viewBox="0 0 13 15" fill="none"><g stroke="#bdbdbd" stroke-width="1.3" fill="none"><path d="M1 12 V1.2 H10.5"/><rect x="3.5" y="3.8" width="8.5" height="10.3" rx="1"/></g></svg></div>
<div class="t" style="left:1126.97px;width:800px;text-align:center;top:727.25px;font-size:14px;color:#b4b4b4;font-weight:400;letter-spacing:1.748px;">0</div>
<div class="t" style="left:1272.11px;width:800px;text-align:center;top:727.25px;font-size:14px;color:#b4b4b4;font-weight:400;letter-spacing:0.411px;">0.00037691</div>
<div class="t" style="left:1417.56px;width:800px;text-align:center;top:727.25px;font-size:14px;color:#b4b4b4;font-weight:400;letter-spacing:-0.279px;">1,932,896</div>
<div class="b" style="left:229.00px;top:818.00px;width:1662.00px;height:1.00px;background:#3a3a3a;border-radius:0px;"></div>
<div class="g" style="left:-100.60px;top:780.50px;gap:6px"><span style="font-size:14px;color:#8e7cf6;font-weight:400;line-height:1;margin-right:-0.590px;"><span style="letter-spacing:0.59px">0x34</span> <span style="letter-spacing:-1.35px">..</span><span style="letter-spacing:-0.65px">.</span> <span style="letter-spacing:0.59px">48f4</span></span><svg style="" width="13" height="15" viewBox="0 0 13 15" fill="none"><g stroke="#bdbdbd" stroke-width="1.3" fill="none"><path d="M1 12 V1.2 H10.5"/><rect x="3.5" y="3.8" width="8.5" height="10.3" rx="1"/></g></svg></div>
<div class="b" style="left:420.00px;top:780.50px;width:56.00px;height:20.00px;background:#262626;border-radius:5px;"></div>
<div class="t" style="left:48.13px;width:800px;text-align:center;top:783.25px;font-size:14px;color:#b4b4b4;font-weight:400;letter-spacing:0.266px;">remasc</div>
<div class="b" style="left:526.90px;top:780.50px;width:133.40px;height:20.00px;background:#262626;border-radius:5px;"></div>
<div class="t" style="left:193.67px;width:800px;text-align:center;top:783.25px;font-size:14px;color:#b4b4b4;font-weight:400;letter-spacing:0.132px;">processMinersFees</div>
<div class="b" style="left:708.50px;top:780.50px;width:62.00px;height:20.00px;background:#2b5219;border-radius:5px;"></div>
<div class="t" style="left:339.53px;width:800px;text-align:center;top:783.25px;font-size:14px;color:#e9f5d6;font-weight:400;letter-spacing:0.054px;">Success</div>
<div class="t" style="left:485.69px;width:800px;text-align:center;top:783.25px;font-size:14px;color:#8e7cf6;font-weight:400;letter-spacing:-0.226px;">7479797</div>
<div class="t" style="left:636.22px;width:800px;text-align:center;top:783.25px;font-size:14px;color:#b4b4b4;font-weight:400;letter-spacing:0.636px;">2026-03-23 20:24:48</div>
<div class="g" style="left:784.10px;top:780.50px;gap:6px"><span style="font-size:14px;color:#8e7cf6;font-weight:400;line-height:1;margin-right:-1.510px;"><span style="letter-spacing:1.51px">0x00</span> <span style="letter-spacing:-1.35px">..</span><span style="letter-spacing:-0.65px">.</span> <span style="letter-spacing:1.51px">0000</span></span><svg style="" width="13" height="15" viewBox="0 0 13 15" fill="none"><g stroke="#bdbdbd" stroke-width="1.3" fill="none"><path d="M1 12 V1.2 H10.5"/><rect x="3.5" y="3.8" width="8.5" height="10.3" rx="1"/></g></svg></div>
<svg style="position:absolute;left:1275.00px;top:785.50px;" width="17" height="10" viewBox="0 0 17 10" fill="none"><g stroke="#c0c0c0" stroke-width="1.4" fill="none" stroke-linecap="round"><path d="M1 5 H15.5 M11.5 1 L15.5 5 L11.5 9"/></g></svg>
<div class="g" style="left:977.50px;top:780.50px;gap:6px"><span style="font-size:14px;color:#8e7cf6;font-weight:400;line-height:1;margin-right:-1.350px;"><span style="letter-spacing:1.35px">0x00</span> <span style="letter-spacing:-1.35px">..</span><span style="letter-spacing:-0.65px">.</span> <span style="letter-spacing:1.35px">0008</span></span><svg style="" width="13" height="15" viewBox="0 0 13 15" fill="none"><g stroke="#bdbdbd" stroke-width="1.3" fill="none"><path d="M1 12 V1.2 H10.5"/><rect x="3.5" y="3.8" width="8.5" height="10.3" rx="1"/></g></svg></div>
<div class="t" style="left:1126.97px;width:800px;text-align:center;top:783.25px;font-size:14px;color:#b4b4b4;font-weight:400;letter-spacing:1.748px;">0</div>
<div class="t" style="left:1272.77px;width:800px;text-align:center;top:783.25px;font-size:14px;color:#b4b4b4;font-weight:400;letter-spacing:1.748px;">0</div>
<div class="t" style="left:1418.57px;width:800px;text-align:center;top:783.25px;font-size:14px;color:#b4b4b4;font-weight:400;letter-spacing:1.748px;">0</div>
<div class="b" style="left:229.00px;top:874.00px;width:1662.00px;height:1.00px;background:#3a3a3a;border-radius:0px;"></div>
<div class="g" style="left:-100.60px;top:836.50px;gap:6px"><span style="font-size:14px;color:#8e7cf6;font-weight:400;line-height:1;margin-right:-0.380px;"><span style="letter-spacing:0.38px">0xcd</span> <span style="letter-spacing:-1.35px">..</span><span style="letter-spacing:-0.65px">.</span> <span style="letter-spacing:0.38px">d447</span></span><svg style="" width="13" height="15" viewBox="0 0 13 15" fill="none"><g stroke="#bdbdbd" stroke-width="1.3" fill="none"><path d="M1 12 V1.2 H10.5"/><rect x="3.5" y="3.8" width="8.5" height="10.3" rx="1"/></g></svg></div>
<div class="b" style="left:403.65px;top:836.50px;width:88.70px;height:20.00px;background:#262626;border-radius:5px;"></div>
<div class="t" style="left:48.21px;width:800px;text-align:center;top:839.25px;font-size:14px;color:#b4b4b4;font-weight:400;letter-spacing:0.423px;">contract call</div>
<div class="b" style="left:546.80px;top:836.50px;width:93.60px;height:20.00px;background:#262626;border-radius:5px;"></div>
<div class="t" style="left:193.98px;width:800px;text-align:center;top:839.25px;font-size:14px;color:#b4b4b4;font-weight:400;letter-spacing:0.752px;">0x5a686699</div>
<div class="b" style="left:708.50px;top:836.50px;width:62.00px;height:20.00px;background:#2b5219;border-radius:5px;"></div>
<div class="t" style="left:339.53px;width:800px;text-align:center;top:839.25px;font-size:14px;color:#e9f5d6;font-weight:400;letter-spacing:0.054px;">Success</div>
<div class="t" style="left:485.69px;width:800px;text-align:center;top:839.25px;font-size:14px;color:#8e7cf6;font-weight:400;letter-spacing:-0.226px;">7479797</div>
<div class="t" style="left:636.22px;width:800px;text-align:center;top:839.25px;font-size:14px;color:#b4b4b4;font-weight:400;letter-spacing:0.636px;">2026-03-23 20:24:48</div>
<div class="g" style="left:784.10px;top:836.50px;gap:6px"><span style="font-size:14px;color:#8e7cf6;font-weight:400;line-height:1;margin-right:-0.130px;"><span style="letter-spacing:0.13px">0xC6</span> <span style="letter-spacing:-1.35px">..</span><span style="letter-spacing:-0.65px">.</span> <span style="letter-spacing:0.13px">74Ba</span></span><svg style="" width="13" height="15" viewBox="0 0 13 15" fill="none"><g stroke="#bdbdbd" stroke-width="1.3" fill="none"><path d="M1 12 V1.2 H10.5"/><rect x="3.5" y="3.8" width="8.5" height="10.3" rx="1"/></g></svg></div>
<svg style="position:absolute;left:1275.00px;top:841.50px;" width="17" height="10" viewBox="0 0 17 10" fill="none"><g stroke="#c0c0c0" stroke-width="1.4" fill="none" stroke-linecap="round"><path d="M1 5 H15.5 M11.5 1 L15.5 5 L11.5 9"/></g></svg>
<div class="g" style="left:977.50px;top:836.50px;gap:6px"><span style="font-size:14px;color:#8e7cf6;font-weight:400;line-height:1;margin-right:-0.560px;"><span style="letter-spacing:0.56px">0x46</span> <span style="letter-spacing:-1.35px">..</span><span style="letter-spacing:-0.65px">.</span> <span style="letter-spacing:0.56px">f48a</span></span><svg style="" width="13" height="15" viewBox="0 0 13 15" fill="none"><g stroke="#bdbdbd" stroke-width="1.3" fill="none"><path d="M1 12 V1.2 H10.5"/><rect x="3.5" y="3.8" width="8.5" height="10.3" rx="1"/></g></svg></div>
<div class="t" style="left:1126.97px;width:800px;text-align:center;top:839.25px;font-size:14px;color:#b4b4b4;font-weight:400;letter-spacing:1.748px;">0</div>
<div class="t" style="left:1272.51px;width:800px;text-align:center;top:839.25px;font-size:14px;color:#b4b4b4;font-weight:400;letter-spacing:1.224px;">0.00000044</div>
<div class="t" style="left:1417.78px;width:800px;text-align:center;top:839.25px;font-size:14px;color:#b4b4b4;font-weight:400;letter-spacing:0.162px;">59,969</div>
<div class="b" style="left:229.00px;top:930.00px;width:1662.00px;height:1.00px;background:#3a3a3a;border-radius:0px;"></div>
<div class="g" style="left:-100.60px;top:892.50px;gap:6px"><span style="font-size:14px;color:#8e7cf6;font-weight:400;line-height:1;margin-right:-0.380px;"><span style="letter-spacing:0.38px">0xa7</span> <span style="letter-spacing:-1.35px">..</span><span style="letter-spacing:-0.65px">.</span> <span style="letter-spacing:0.38px">28d9</span></span><svg style="" width="13" height="15" viewBox="0 0 13 15" fill="none"><g stroke="#bdbdbd" stroke-width="1.3" fill="none"><path d="M1 12 V1.2 H10.5"/><rect x="3.5" y="3.8" width="8.5" height="10.3" rx="1"/></g></svg></div>
<div class="b" style="left:421.65px;top:892.50px;width:52.70px;height:20.00px;background:#262626;border-radius:5px;"></div>
<div class="t" style="left:48.12px;width:800px;text-align:center;top:895.25px;font-size:14px;color:#b4b4b4;font-weight:400;letter-spacing:0.234px;">normal</div>
<div class="b" style="left:708.50px;top:892.50px;width:62.00px;height:20.00px;background:#2b5219;border-radius:5px;"></div>
<div class="t" style="left:339.53px;width:800px;text-align:center;top:895.25px;font-size:14px;color:#e9f5d6;font-weight:400;letter-spacing:0.054px;">Success</div>
<div class="t" style="left:485.69px;width:800px;text-align:center;top:895.25px;font-size:14px;color:#8e7cf6;font-weight:400;letter-spacing:-0.226px;">7479797</div>
<div class="t" style="left:636.22px;width:800px;text-align:center;top:895.25px;font-size:14px;color:#b4b4b4;font-weight:400;letter-spacing:0.636px;">2026-03-23 20:24:48</div>
<div class="g" style="left:784.10px;top:892.50px;gap:6px"><span style="font-size:14px;color:#8e7cf6;font-weight:400;line-height:1;margin-right:-0.390px;"><span style="letter-spacing:0.39px">0xd0</span> <span style="letter-spacing:-1.35px">..</span><span style="letter-spacing:-0.65px">.</span> <span style="letter-spacing:0.39px">9877</span></span><svg style="" width="13" height="15" viewBox="0 0 13 15" fill="none"><g stroke="#bdbdbd" stroke-width="1.3" fill="none"><path d="M1 12 V1.2 H10.5"/><rect x="3.5" y="3.8" width="8.5" height="10.3" rx="1"/></g></svg></div>
<svg style="position:absolute;left:1275.00px;top:897.50px;" width="17" height="10" viewBox="0 0 17 10" fill="none"><g stroke="#c0c0c0" stroke-width="1.4" fill="none" stroke-linecap="round"><path d="M1 5 H15.5 M11.5 1 L15.5 5 L11.5 9"/></g></svg>
<div class="g" style="left:977.50px;top:892.50px;gap:6px"><span style="font-size:14px;color:#8e7cf6;font-weight:400;line-height:1;margin-right:-0.120px;"><span style="letter-spacing:0.12px">0xFf</span> <span style="letter-spacing:-1.35px">..</span><span style="letter-spacing:-0.65px">.</span> <span style="letter-spacing:0.12px">6BcB</span></span><svg style="" width="13" height="15" viewBox="0 0 13 15" fill="none"><g stroke="#bdbdbd" stroke-width="1.3" fill="none"><path d="M1 12 V1.2 H10.5"/><rect x="3.5" y="3.8" width="8.5" height="10.3" rx="1"/></g></svg></div>
<div class="t" style="left:1126.97px;width:800px;text-align:center;top:895.25px;font-size:14px;color:#b4b4b4;font-weight:400;letter-spacing:1.748px;">0</div>
<div class="t" style="left:1272.25px;width:800px;text-align:center;top:895.25px;font-size:14px;color:#b4b4b4;font-weight:400;letter-spacing:0.704px;">0.00037686</div>
<div class="t" style="left:1417.56px;width:800px;text-align:center;top:895.25px;font-size:14px;color:#b4b4b4;font-weight:400;letter-spacing:-0.279px;">1,932,592</div>
<div class="b" style="left:229.00px;top:986.00px;width:1662.00px;height:1.00px;background:#3a3a3a;border-radius:0px;"></div>
<div class="g" style="left:-100.60px;top:948.50px;gap:6px"><span style="font-size:14px;color:#8e7cf6;font-weight:400;line-height:1;margin-right:-0.310px;"><span style="letter-spacing:0.31px">0x0d</span> <span style="letter-spacing:-1.35px">..</span><span style="letter-spacing:-0.65px">.</span> <span style="letter-spacing:0.31px">fe91</span></span><svg style="" width="13" height="15" viewBox="0 0 13 15" fill="none"><g stroke="#bdbdbd" stroke-width="1.3" fill="none"><path d="M1 12 V1.2 H10.5"/><rect x="3.5" y="3.8" width="8.5" height="10.3" rx="1"/></g></svg></div>
<div class="b" style="left:420.00px;top:948.50px;width:56.00px;height:20.00px;background:#262626;border-radius:5px;"></div>
<div class="t" style="left:48.13px;width:800px;text-align:center;top:951.25px;font-size:14px;color:#b4b4b4;font-weight:400;letter-spacing:0.266px;">remasc</div>
<div class="b" style="left:526.90px;top:948.50px;width:133.40px;height:20.00px;background:#262626;border-radius:5px;"></div>
<div class="t" style="left:193.67px;width:800px;text-align:center;top:951.25px;font-size:14px;color:#b4b4b4;font-weight:400;letter-spacing:0.132px;">processMinersFees</div>
<div class="b" style="left:708.50px;top:948.50px;width:62.00px;height:20.00px;background:#2b5219;border-radius:5px;"></div>
<div class="t" style="left:339.53px;width:800px;text-align:center;top:951.25px;font-size:14px;color:#e9f5d6;font-weight:400;letter-spacing:0.054px;">Success</div>
<div class="t" style="left:485.78px;width:800px;text-align:center;top:951.25px;font-size:14px;color:#8e7cf6;font-weight:400;letter-spacing:-0.039px;">7479796</div>
<div class="t" style="left:636.14px;width:800px;text-align:center;top:951.25px;font-size:14px;color:#b4b4b4;font-weight:400;letter-spacing:0.477px;">2026-03-23 20:24:18</div>
<div class="g" style="left:784.10px;top:948.50px;gap:6px"><span style="font-size:14px;color:#8e7cf6;font-weight:400;line-height:1;margin-right:-1.510px;"><span style="letter-spacing:1.51px">0x00</span> <span style="letter-spacing:-1.35px">..</span><span style="letter-spacing:-0.65px">.</span> <span style="letter-spacing:1.51px">0000</span></span><svg style="" width="13" height="15" viewBox="0 0 13 15" fill="none"><g stroke="#bdbdbd" stroke-width="1.3" fill="none"><path d="M1 12 V1.2 H10.5"/><rect x="3.5" y="3.8" width="8.5" height="10.3" rx="1"/></g></svg></div>
<svg style="position:absolute;left:1275.00px;top:953.50px;" width="17" height="10" viewBox="0 0 17 10" fill="none"><g stroke="#c0c0c0" stroke-width="1.4" fill="none" stroke-linecap="round"><path d="M1 5 H15.5 M11.5 1 L15.5 5 L11.5 9"/></g></svg>
<div class="g" style="left:977.50px;top:948.50px;gap:6px"><span style="font-size:14px;color:#8e7cf6;font-weight:400;line-height:1;margin-right:-1.350px;"><span style="letter-spacing:1.35px">0x00</span> <span style="letter-spacing:-1.35px">..</span><span style="letter-spacing:-0.65px">.</span> <span style="letter-spacing:1.35px">0008</span></span><svg style="" width="13" height="15" viewBox="0 0 13 15" fill="none"><g stroke="#bdbdbd" stroke-width="1.3" fill="none"><path d="M1 12 V1.2 H10.5"/><rect x="3.5" y="3.8" width="8.5" height="10.3" rx="1"/></g></svg></div>
<div class="t" style="left:1126.97px;width:800px;text-align:center;top:951.25px;font-size:14px;color:#b4b4b4;font-weight:400;letter-spacing:1.748px;">0</div>
<div class="t" style="left:1272.77px;width:800px;text-align:center;top:951.25px;font-size:14px;color:#b4b4b4;font-weight:400;letter-spacing:1.748px;">0</div>
<div class="t" style="left:1418.57px;width:800px;text-align:center;top:951.25px;font-size:14px;color:#b4b4b4;font-weight:400;letter-spacing:1.748px;">0</div>
</div>
<div class="b" style="left:229.00px;top:322.00px;width:1662.00px;height:52.00px;background:#151515;border-radius:0px;border-radius:12px 12px 0 0;"></div>
<div class="g" style="left:-98.10px;top:337.25px;gap:4.5px"><span style="font-size:14px;color:#ffffff;font-weight:400;line-height:1;letter-spacing:-0.222px;margin-right:0.222px;-webkit-text-stroke:0.3px #fff;">Hash</span></div>
<div class="g" style="left:47.90px;top:337.25px;gap:4.5px"><span style="font-size:14px;color:#ffffff;font-weight:400;line-height:1;letter-spacing:0.135px;margin-right:-0.135px;-webkit-text-stroke:0.3px #fff;">Type</span><svg style="" width="10.5" height="13.5" viewBox="0 0 10.5 13.5" fill="none"><path d="M1.6 0.8 H8.9 a1 1 0 0 1 0.75 1.65 L6.4 6.3 V12.2 a0.6 0.6 0 0 1-1 0.45 L4.3 11.5 V6.3 L0.85 2.45 A1 1 0 0 1 1.6 0.8 Z" stroke="#fff" stroke-width="1.25" fill="none" stroke-linejoin="round"/></svg></div>
<div class="g" style="left:193.80px;top:337.25px;gap:4.5px"><span style="font-size:14px;color:#ffffff;font-weight:400;line-height:1;letter-spacing:0.483px;margin-right:-0.483px;-webkit-text-stroke:0.3px #fff;">Method</span></div>
<div class="g" style="left:339.60px;top:337.25px;gap:4.5px"><span style="font-size:14px;color:#ffffff;font-weight:400;line-height:1;letter-spacing:0.216px;margin-right:-0.216px;-webkit-text-stroke:0.3px #fff;">Status</span><svg style="" width="10.5" height="13.5" viewBox="0 0 10.5 13.5" fill="none"><path d="M1.6 0.8 H8.9 a1 1 0 0 1 0.75 1.65 L6.4 6.3 V12.2 a0.6 0.6 0 0 1-1 0.45 L4.3 11.5 V6.3 L0.85 2.45 A1 1 0 0 1 1.6 0.8 Z" stroke="#fff" stroke-width="1.25" fill="none" stroke-linejoin="round"/></svg></div>
<div class="g" style="left:485.80px;top:337.25px;gap:4.5px"><span style="font-size:14px;color:#ffffff;font-weight:400;line-height:1;letter-spacing:-0.007px;margin-right:0.007px;-webkit-text-stroke:0.3px #fff;">Block</span><svg style="" width="10.5" height="13.5" viewBox="0 0 10.5 13.5" fill="none"><path d="M1.6 0.8 H8.9 a1 1 0 0 1 0.75 1.65 L6.4 6.3 V12.2 a0.6 0.6 0 0 1-1 0.45 L4.3 11.5 V6.3 L0.85 2.45 A1 1 0 0 1 1.6 0.8 Z" stroke="#fff" stroke-width="1.25" fill="none" stroke-linejoin="round"/></svg></div>
<div class="g" style="left:631.30px;top:337.25px;gap:4.5px"><span style="font-size:14px;color:#ffffff;font-weight:400;line-height:1;letter-spacing:0.080px;margin-right:-0.080px;-webkit-text-stroke:0.3px #fff;">Date</span><svg style="" width="10.5" height="13.5" viewBox="0 0 10.5 13.5" fill="none"><path d="M1.6 0.8 H8.9 a1 1 0 0 1 0.75 1.65 L6.4 6.3 V12.2 a0.6 0.6 0 0 1-1 0.45 L4.3 11.5 V6.3 L0.85 2.45 A1 1 0 0 1 1.6 0.8 Z" stroke="#fff" stroke-width="1.25" fill="none" stroke-linejoin="round"/></svg><svg style="margin-left:1.5px" width="15" height="15" viewBox="0 0 15 15" fill="none"><g stroke="#fff" stroke-width="1.3" fill="none" stroke-linecap="round" stroke-linejoin="round"><circle cx="7.5" cy="7.5" r="6.6"/><path d="M7 4 V7.9 L9.3 7" stroke-width="1.5"/></g></svg></div>
<div class="g" style="left:777.80px;top:337.25px;gap:4.5px"><span style="font-size:14px;color:#ffffff;font-weight:400;line-height:1;letter-spacing:-0.168px;margin-right:0.168px;-webkit-text-stroke:0.3px #fff;">From</span><svg style="" width="10.5" height="13.5" viewBox="0 0 10.5 13.5" fill="none"><path d="M1.6 0.8 H8.9 a1 1 0 0 1 0.75 1.65 L6.4 6.3 V12.2 a0.6 0.6 0 0 1-1 0.45 L4.3 11.5 V6.3 L0.85 2.45 A1 1 0 0 1 1.6 0.8 Z" stroke="#fff" stroke-width="1.25" fill="none" stroke-linejoin="round"/></svg></div>
<div class="g" style="left:879.40px;top:337.25px;gap:4.5px"><span style="font-size:14px;color:#ffffff;font-weight:400;line-height:1;letter-spacing:-0.521px;margin-right:0.521px;-webkit-text-stroke:0.3px #fff;">AND</span><svg style="" width="10.5" height="13.5" viewBox="0 0 10.5 13.5" fill="none"><path d="M1.6 0.8 H8.9 a1 1 0 0 1 0.75 1.65 L6.4 6.3 V12.2 a0.6 0.6 0 0 1-1 0.45 L4.3 11.5 V6.3 L0.85 2.45 A1 1 0 0 1 1.6 0.8 Z" stroke="#fff" stroke-width="1.25" fill="none" stroke-linejoin="round"/></svg></div>
<div class="g" style="left:979.80px;top:337.25px;gap:4.5px"><span style="font-size:14px;color:#ffffff;font-weight:400;line-height:1;letter-spacing:-0.448px;margin-right:0.448px;-webkit-text-stroke:0.3px #fff;">To</span><svg style="" width="10.5" height="13.5" viewBox="0 0 10.5 13.5" fill="none"><path d="M1.6 0.8 H8.9 a1 1 0 0 1 0.75 1.65 L6.4 6.3 V12.2 a0.6 0.6 0 0 1-1 0.45 L4.3 11.5 V6.3 L0.85 2.45 A1 1 0 0 1 1.6 0.8 Z" stroke="#fff" stroke-width="1.25" fill="none" stroke-linejoin="round"/></svg></div>
<div class="g" style="left:1125.80px;top:337.25px;gap:4.5px"><span style="font-size:14px;color:#ffffff;font-weight:400;line-height:1;letter-spacing:-0.186px;margin-right:0.186px;-webkit-text-stroke:0.3px #fff;">Amount RBTC</span></div>
<div class="g" style="left:1272.00px;top:337.25px;gap:4.5px"><span style="font-size:14px;color:#ffffff;font-weight:400;line-height:1;letter-spacing:-0.766px;margin-right:0.766px;-webkit-text-stroke:0.3px #fff;">Fee RBTC</span></div>
<div class="g" style="left:1417.90px;top:337.25px;gap:4.5px"><span style="font-size:14px;color:#ffffff;font-weight:400;line-height:1;letter-spacing:-0.206px;margin-right:0.206px;-webkit-text-stroke:0.3px #fff;">Gas Used</span></div>
<div class="b" style="left:712.20px;top:361.50px;width:249.70px;height:141.70px;background:#242424;border-radius:7px;border:1px solid #3c3c3c;box-sizing:border-box;"></div>
<div class="t" style="left:729.50px;top:373.25px;font-size:14px;color:#a6a6a6;font-weight:400;letter-spacing:0.155px;">Transaction Status</div>
<div class="b" style="left:733.00px;top:400.50px;width:16.00px;height:16.00px;background:transparent;border-radius:3.5px;border:1px solid #c5cfe0;box-sizing:border-box;"></div>
<div class="t" style="left:757.30px;top:401.65px;font-size:14px;color:#ffffff;font-weight:400;letter-spacing:0.054px;">Success</div>
<div class="b" style="left:733.00px;top:428.70px;width:16.00px;height:16.00px;background:transparent;border-radius:3.5px;border:1px solid #c5cfe0;box-sizing:border-box;"></div>
<div class="t" style="left:757.30px;top:429.85px;font-size:14px;color:#ffffff;font-weight:400;letter-spacing:-0.173px;">Failed</div>
<div class="t" style="left:729.50px;top:473.25px;font-size:14px;color:#6a58b8;font-weight:400;letter-spacing:-0.276px;">Reset</div>
<div class="b" style="left:891.10px;top:466.40px;width:53.60px;height:28.00px;background:#5a4b9c;border-radius:8px;"></div>
<div class="t" style="left:899.70px;top:473.25px;font-size:14px;color:#101010;font-weight:400;letter-spacing:0.394px;">Apply</div>
<div class="b" style="left:1873.20px;top:410.20px;width:40.00px;height:136.00px;background:#f4942c;border-radius:8px;"></div>
<div class="t" style="left:1858.2px;top:457.4px;width:69.5px;height:15px;font-size:15px;color:#0a0a0a;transform:rotate(-90deg);letter-spacing:0.45px;text-align:center;-webkit-text-stroke:0.3px #0a0a0a">Feedback</div>
<svg style="position:absolute;left:1884.00px;top:511.00px;" width="16.5" height="15" viewBox="0 0 16.5 15" fill="none"><path d="M0.3 0.3 L14.5 0.8 a1.6 1.6 0 0 1 1.6 1.6 V12.6 a1.6 1.6 0 0 1-1.6 1.6 H4.2 A1.6 1.6 0 0 1 2.6 12.6 V4 Z" fill="#0a0a0a"/><path d="M6.3 8.3 a3.3 2.8 0 0 0 6.2 0" stroke="#f4942c" stroke-width="1.3" fill="none" stroke-linecap="round"/><circle cx="7" cy="5.4" r="1" fill="#f4942c"/><circle cx="11.8" cy="5.4" r="1" fill="#f4942c"/></svg>
<div class="b" style="left:0.00px;top:959.00px;width:1908.00px;height:1.00px;background:#3a3a3a;border-radius:0px;"></div>
<svg style="position:absolute;left:0.00px;top:944.00px;" width="16" height="16" viewBox="0 0 16 16" fill="none"><path d="M0 0 V0 A16 16 0 0 0 16 16 H0 Z" fill="#1d2416"/><path d="M0.5 0 A15.5 15.5 0 0 0 16 15.5" stroke="#3a3a3a" stroke-width="1" fill="none"/></svg>
<svg style="position:absolute;left:1890.00px;top:950.00px;" width="18" height="10" viewBox="0 0 18 10" fill="none"><path d="M18 6.8 Q12 9.6 3 9.6 H18 Z" fill="#121212"/><path d="M18 6.6 Q12 9.4 0 9.5" stroke="#3a3a3a" stroke-width="1" fill="none"/></svg>
</body></html>
